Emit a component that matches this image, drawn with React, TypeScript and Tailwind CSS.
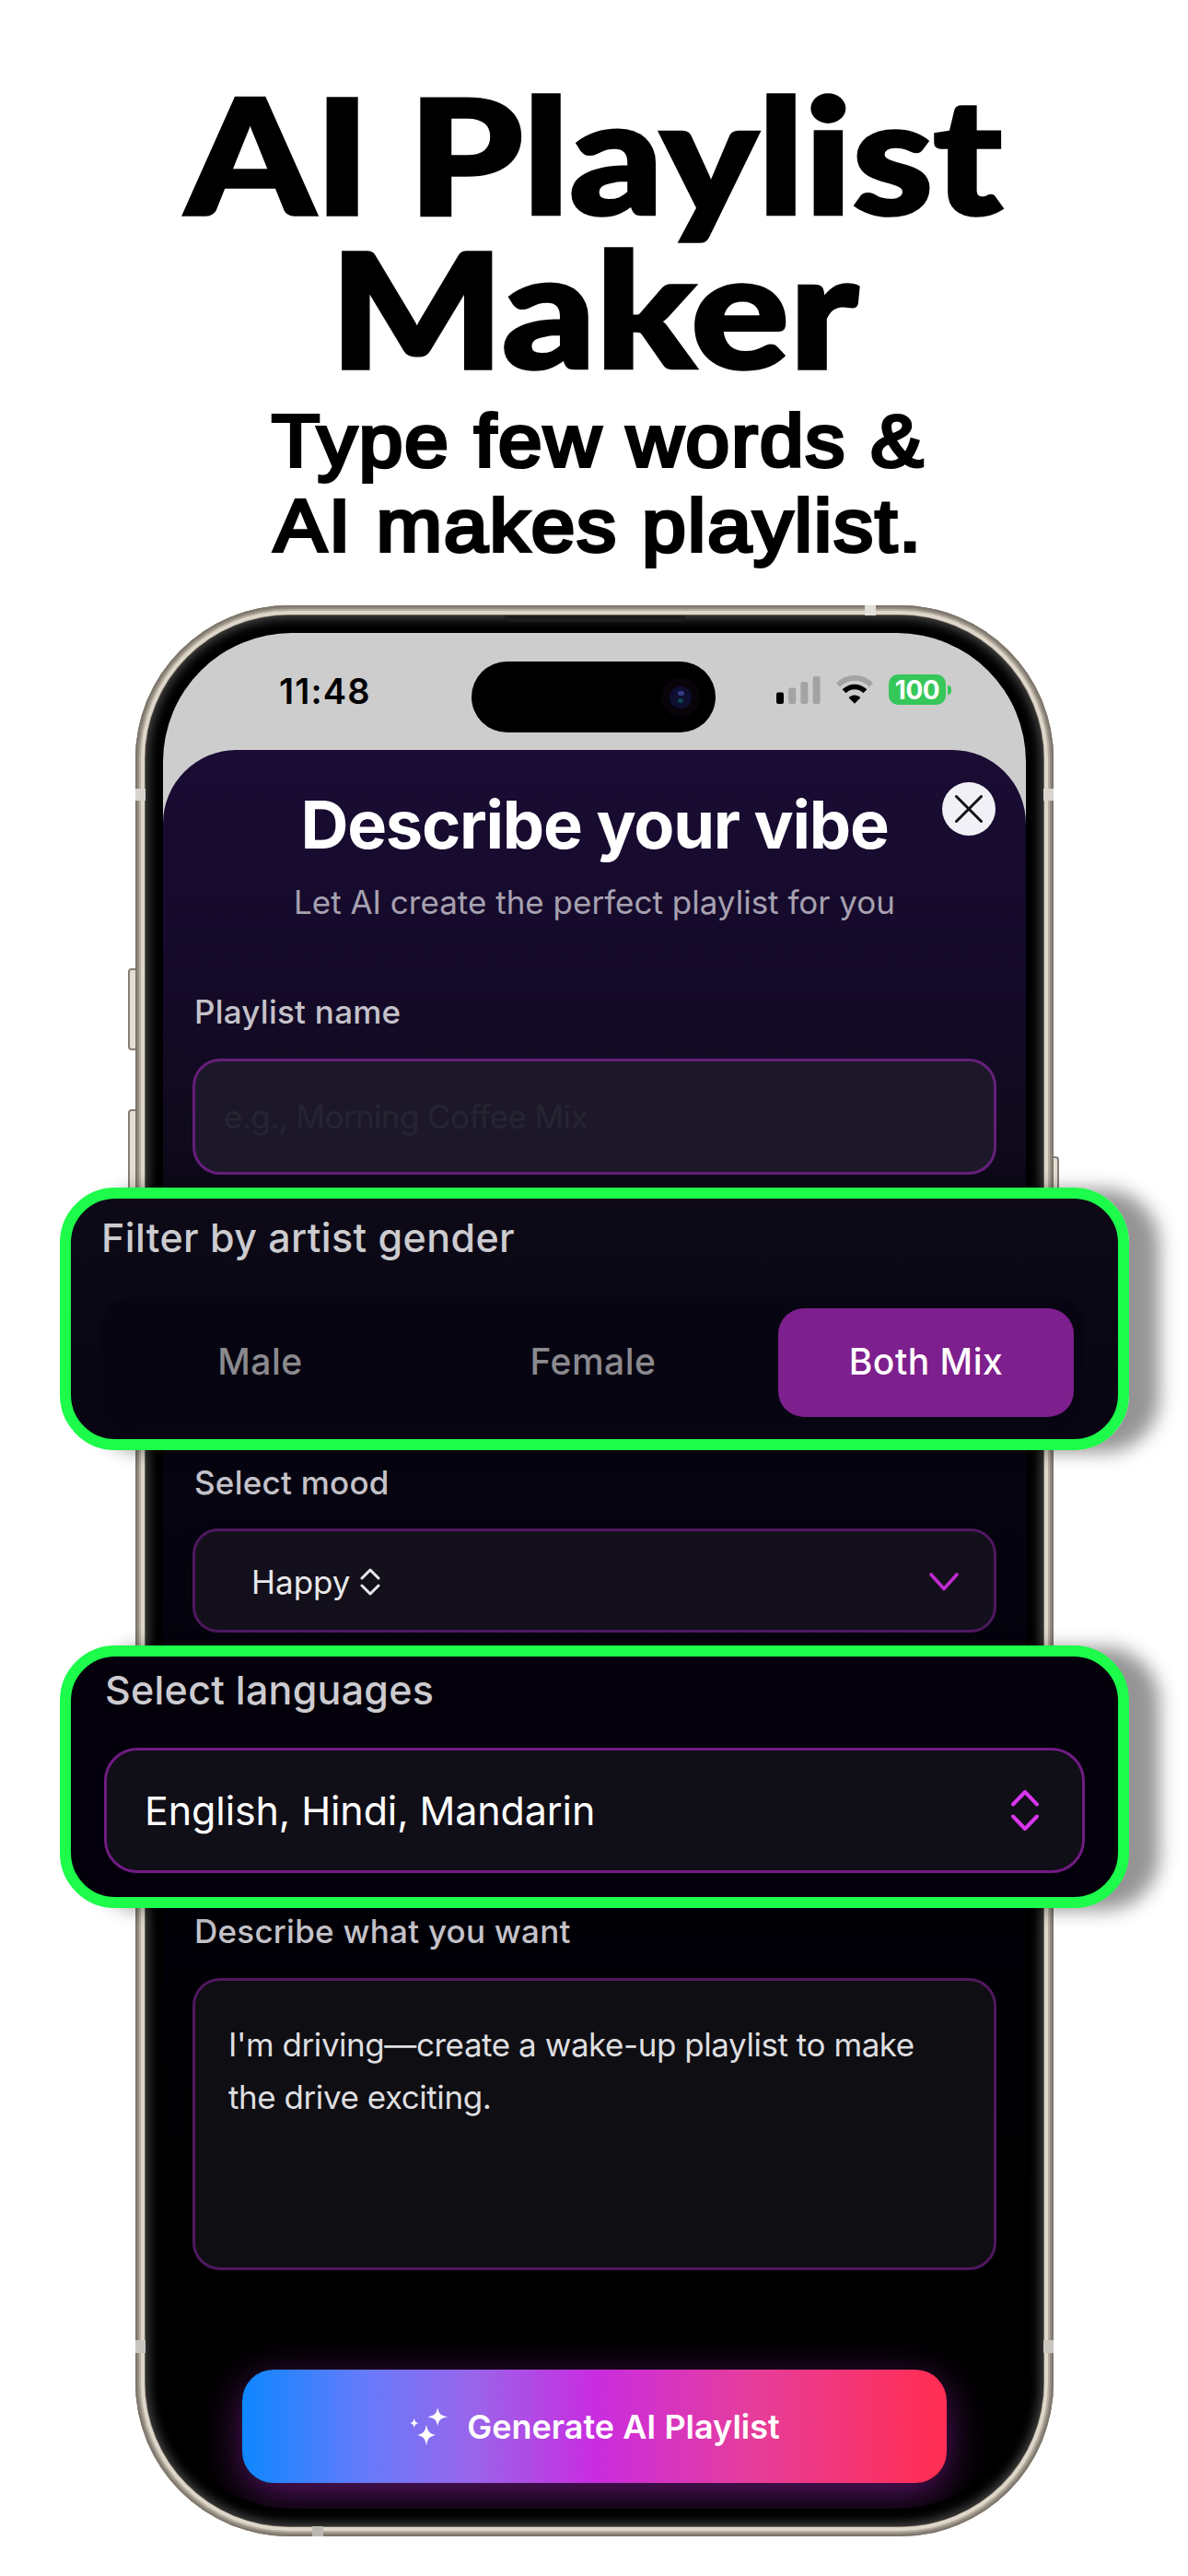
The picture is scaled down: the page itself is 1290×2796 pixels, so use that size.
import React from 'react';

interface FieldLabelProps {
  children: React.ReactNode;
  className?: string;
}

const genders = ['Male', 'Female', 'Both Mix'];

const FieldLabel: React.FC<FieldLabelProps> = ({ children, className = '' }) => (
  <div className={`whitespace-nowrap pl-[2px] text-[35px] font-medium leading-[44px] tracking-[0.25px] text-[#c4c2c9] ${className}`}>
    {children}
  </div>
);

const SignalIcon = () => (
  <svg className="h-[30px] w-[48px]" viewBox="0 0 48 30">
    <rect x="0" y="17.5" width="8" height="12.5" rx="2" fill="#000" />
    <rect x="13.2" y="12.5" width="8" height="17.5" rx="2" fill="#a3a3a3" />
    <rect x="26.4" y="6" width="8" height="24" rx="2" fill="#a3a3a3" />
    <rect x="39.6" y="0" width="8" height="30" rx="2" fill="#a3a3a3" />
  </svg>
);

const WifiIcon = () => (
  <svg className="h-[31px] w-[42px]" viewBox="0 0 42 31" fill="none">
    <path d="M3 10.5C13 0.3 29 0.3 39 10.5" stroke="#a3a3a3" strokeWidth="5.6" />
    <path d="M9.6 17.3C16 10.9 26 10.9 32.4 17.3" stroke="#000" strokeWidth="5.6" />
    <path d="M14.6 24.2C18.2 20.6 23.8 20.6 27.4 24.2L21 30.8Z" fill="#000" />
  </svg>
);

const SparklesIcon = () => (
  <svg className="h-[42px] w-[42px]" viewBox="0 0 42 42" fill="#fff">
    <path d="M18 18.5C19.3 26 21 28.5 28.5 30C21 31.5 19.3 34 18 41.5C16.7 34 15 31.5 7.5 30C15 28.5 16.7 26 18 18.5Z" />
    <path d="M30.2 0C31.4 6.8 33.4 9 41.5 10.2C33.4 11.4 31.4 13.6 30.2 20.4C29 13.6 27 11.4 18.9 10.2C27 9 29 6.8 30.2 0Z" />
    <path d="M4.8 11.4C5.5 15.2 6.4 16.3 9.8 17C6.4 17.7 5.5 18.8 4.8 22.6C4.1 18.8 3.2 17.7 -0.2 17C3.2 16.3 4.1 15.2 4.8 11.4Z" />
  </svg>
);

const App: React.FC = () => {
  return (
    <div className="flex h-[2796px] w-[1290px] flex-col overflow-hidden bg-white font-['Inter',sans-serif]">
      {/* Headline */}
      <h1 className="mt-[83px] scale-x-[1.15] whitespace-nowrap text-center font-['Lato',sans-serif] text-[173px] font-black leading-[167px] text-black [-webkit-text-stroke:3.5px_#000] [word-spacing:-5px]">
        AI Playlist
        <br />
        Maker
      </h1>
      <p className="mt-[16px] scale-x-[1.08] whitespace-nowrap pl-[9px] text-center font-['Liberation_Sans',sans-serif] text-[79px] leading-[91.5px] tracking-[2.1px] text-black [-webkit-text-stroke:4px_#000]">
        Type few words &amp;
        <br />
        AI makes playlist.
      </p>

      {/* Phone */}
      <div className="relative ml-[147px] mt-[41px] h-[2096px] w-[997px] shrink-0">
        {/* Side buttons */}
        <div className="absolute -left-[8px] top-[394px] h-[89px] w-[10px] rounded-l-[4px] border-2 border-[#857e75] bg-[#e4ded3]" />
        <div className="absolute -left-[8px] top-[547px] h-[89px] w-[10px] rounded-l-[4px] border-2 border-[#857e75] bg-[#e4ded3]" />
        <div className="absolute -right-[6px] top-[598px] h-[140px] w-[8px] rounded-r-[4px] border-2 border-[#857e75] bg-[#e4ded3]" />

        <div className="relative h-full w-full rounded-[167px] bg-[#6f685f] p-[11px] shadow-[inset_0_0_0_2px_#7d766d,inset_0_0_0_4px_#948c80,inset_0_0_0_6px_#b5ad9f,inset_0_0_0_10px_#ddd6c9]">
          {/* Antenna bands */}
          <div className="absolute left-0 top-[199px] h-[13px] w-[11px] bg-[#d8d4cd]" />
          <div className="absolute right-0 top-[199px] h-[13px] w-[11px] bg-[#d8d4cd]" />
          <div className="absolute left-0 top-[1883px] h-[14px] w-[11px] bg-[#c9c5bf]" />
          <div className="absolute right-0 top-[1883px] h-[14px] w-[11px] bg-[#c9c5bf]" />
          <div className="absolute left-[792px] top-0 h-[11px] w-[12px] bg-[#e3dfd9]" />
          <div className="absolute bottom-0 left-[192px] h-[11px] w-[12px] bg-[#bcb8b1]" />

          <div className="h-full w-full rounded-[156px] bg-black p-[19px] shadow-[inset_0_0_12px_3px_#484848]">
            <div className="absolute left-[401px] top-[11px] h-[7px] w-[196px] rounded-b-[6px] bg-[#1c1c1c]" />

            <div className="flex h-full w-full flex-col rounded-[140px] bg-[linear-gradient(#cdcdcd_300px,#000_300px)]">
              {/* Status bar */}
              <div className="flex h-[127px] shrink-0 items-start">
                <div className="ml-[126px] mt-[41px] w-[209px] text-[38px] font-semibold leading-[44px] tracking-[1.2px] text-black">
                  11:48
                </div>
                <div className="mt-[31px] flex h-[77px] w-[265px] items-center justify-end rounded-full bg-black pr-[17px]">
                  <div className="flex h-[42px] w-[42px] items-center justify-center rounded-full bg-[#08040a]">
                    <div className="flex h-[24px] w-[24px] flex-col items-center justify-center gap-[3px] rounded-full bg-[#0e0e30]">
                      <div className="h-[5px] w-[7px] rounded-full bg-[#343a86]" />
                      <div className="h-[5px] w-[6px] rounded-full bg-[#0d4450]" />
                    </div>
                  </div>
                </div>
                <div className="ml-[66px] mt-[47px]">
                  <SignalIcon />
                </div>
                <div className="ml-[16px] mt-[46px]">
                  <WifiIcon />
                </div>
                <div className="ml-[16px] mt-[45px] flex items-center gap-[2px]">
                  <div className="flex h-[33px] w-[62px] items-center justify-center rounded-[10px] bg-[#35c759] text-[28px] font-bold leading-none tracking-[-0.5px] text-white">
                    100
                  </div>
                  <div className="h-[10px] w-[4px] rounded-r-full bg-[#35c759]" />
                </div>
              </div>

              {/* Sheet */}
              <div className="relative flex min-h-0 flex-1 flex-col rounded-b-[140px] rounded-t-[80px] bg-[linear-gradient(#1a0c34_0px,#150a2a_240px,#100a1d_400px,#0c0817_500px,#060410_760px,#020009_1180px,#000_1600px)]">
                <button
                  type="button"
                  className="absolute right-[33px] top-[35px] flex h-[58px] w-[58px] items-center justify-center rounded-full bg-[#f1f0f6]"
                >
                  <svg className="h-[30px] w-[30px]" viewBox="0 0 30 30" stroke="#111" strokeWidth="3" strokeLinecap="round">
                    <path d="M1.5 1.5L28.5 28.5M28.5 1.5L1.5 28.5" />
                  </svg>
                </button>

                <div className="flex flex-col px-[32px]">
                  <h2 className="mt-[41px] whitespace-nowrap text-center text-[72px] font-bold leading-[80px] tracking-[-1.25px] text-white">
                    Describe your vibe
                  </h2>
                  <p className="mt-[22px] whitespace-nowrap text-center text-[35px] leading-[44px] text-[#a6a1b0]">
                    Let AI create the perfect playlist for you
                  </p>

                  <FieldLabel className="mt-[75px]">Playlist name</FieldLabel>
                  <div className="mt-[29px] flex h-[126px] items-center rounded-[30px] border-[3px] border-[#651f7a] bg-[#1d1829] pl-[31px] text-[35px] tracking-[-0.6px] text-[#272432]">
                    e.g., Morning Coffee Mix
                  </div>

                  {/* Gender filter callout */}
                  <div className="relative -mx-[144px] mt-[14px] flex h-[285px] flex-col rounded-[60px] border-[12px] border-[#1dfb4b] bg-[linear-gradient(#0d0917,#080513)] pl-[33px] pr-[36px] pt-[16px] shadow-[33px_2px_20px_rgba(0,0,0,0.42)]">
                    <div className="whitespace-nowrap text-[43px] font-medium leading-[52px] tracking-[0.4px] text-[#cccbcf]">
                      Filter by artist gender
                    </div>
                    <div className="mt-[38px] flex h-[143px] items-center justify-between rounded-[36px] bg-[#070511] px-[12px]">
                      {genders.map((gender) => (
                        <div
                          key={gender}
                          className={`flex h-[118px] w-[321px] items-center justify-center rounded-[28px] text-[39px] font-medium tracking-[0.5px] ${
                            gender === 'Both Mix' ? 'bg-[#7d1f8c] text-white' : 'text-[#8b8a8f]'
                          }`}
                        >
                          {gender}
                        </div>
                      ))}
                    </div>
                  </div>

                  <FieldLabel className="mt-[13px]">Select mood</FieldLabel>
                  <div className="mt-[28px] flex h-[113px] items-center rounded-[28px] border-[3px] border-[#4f185f] bg-[#13101c] pl-[61px] pr-[38px] pt-[3px] text-[35px] text-[#e8e8ea]">
                    Happy
                    <svg className="ml-[10px] h-[30px] w-[22px]" viewBox="0 0 22 30" fill="none" stroke="currentColor" strokeWidth="3" strokeLinecap="round" strokeLinejoin="round">
                      <path d="M2 11L11 2L20 11M2 19L11 28L20 19" />
                    </svg>
                    <svg className="ml-auto h-[20px] w-[32px]" viewBox="0 0 32 20" fill="none" stroke="#bf2ad2" strokeWidth="3.6" strokeLinecap="round" strokeLinejoin="round">
                      <path d="M2 2L16 17.5L30 2" />
                    </svg>
                  </div>

                  {/* Languages callout */}
                  <div className="relative -mx-[144px] mt-[14px] flex h-[285px] flex-col rounded-[60px] border-[12px] border-[#1dfb4b] bg-[#03000b] px-[36px] pt-[10px] shadow-[33px_2px_20px_rgba(0,0,0,0.42)]">
                    <div className="whitespace-nowrap pl-[1px] text-[43px] font-medium leading-[52px] tracking-[0.25px] text-[#cccbcf]">
                      Select languages
                    </div>
                    <div className="mt-[37px] flex h-[136px] items-center justify-between rounded-[36px] border-[3px] border-[#701b82] bg-[#100e17] pl-[41px] pr-[47px] text-[43px] tracking-[-0.1px] text-white">
                      English, Hindi, Mandarin
                      <svg className="h-[44px] w-[30px]" viewBox="0 0 30 44" fill="none" stroke="#d935ee" strokeWidth="4" strokeLinecap="round" strokeLinejoin="round">
                        <path d="M2 15.5L15 2L28 15.5M2 28.5L15 42L28 28.5" />
                      </svg>
                    </div>
                  </div>

                  <FieldLabel className="mt-[3px]">Describe what you want</FieldLabel>
                  <div className="mt-[29px] h-[317px] whitespace-nowrap rounded-[30px] border-[3px] border-[#4f185f] bg-[#0f0e12] pl-[36px] pt-[41px] text-[35px] leading-[57px] tracking-[-0.45px] text-[#dedee0]">
                    I'm driving—create a wake-up playlist to make
                    <br />
                    the drive exciting.
                  </div>
                </div>

                {/* Footer */}
                <div className="flex flex-1 items-start overflow-hidden rounded-b-[140px] px-[86px] pt-[108px]">
                  <button
                    type="button"
                    className="flex h-[123px] w-full items-center justify-center gap-[20px] rounded-[34px] bg-[linear-gradient(90deg,#0d87ff_0%,#647bfb_17%,#9a64ea_33%,#c92ce0_50%,#e63d9d_72%,#ff2e55_98%)] pl-[1px] text-[36px] font-semibold text-white shadow-[0_12px_44px_rgba(180,40,205,0.5)]"
                  >
                    <SparklesIcon />
                    Generate AI Playlist
                  </button>
                </div>
              </div>
            </div>
          </div>
        </div>
      </div>
    </div>
  );
};

export default App;
